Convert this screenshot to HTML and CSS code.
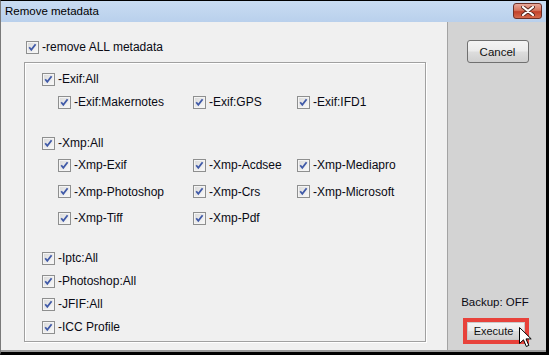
FILE: index.html
```html
<!DOCTYPE html>
<html lang="en">
<head>
    <meta charset="UTF-8">
    <meta name="viewport" content="width=device-width, initial-scale=1.0">
    <title>Remove metadata</title>
    <link rel="stylesheet" href="styles.css">
</head>
<body>
    <div class="window">
        <div class="titlebar">
            <span class="title">Remove metadata</span>
            <span class="close-btn">
                <svg width="14" height="10" viewBox="0 0 14 10">
                    <path d="M2 1 L12 9 M12 1 L2 9" stroke="#5a2a22" stroke-width="4" stroke-linecap="round"/>
                    <path d="M2 1 L12 9 M12 1 L2 9" stroke="#fff" stroke-width="2.2" stroke-linecap="round"/>
                </svg>
            </span>
        </div>

        <div class="client">
            <div class="main">
                <label class="check top-check"><span class="box"></span>-remove ALL metadata</label>

                <div class="group">
                    <!-- Exif -->
                    <div class="section">
                        <label class="check"><span class="box"></span>-Exif:All</label>
                        <div class="sub">
                            <label class="check"><span class="box"></span>-Exif:Makernotes</label>
                            <label class="check"><span class="box"></span>-Exif:GPS</label>
                            <label class="check"><span class="box"></span>-Exif:IFD1</label>
                        </div>
                    </div>

                    <!-- Xmp -->
                    <div class="section xmp">
                        <label class="check"><span class="box"></span>-Xmp:All</label>
                        <div class="sub">
                            <label class="check"><span class="box"></span>-Xmp-Exif</label>
                            <label class="check"><span class="box"></span>-Xmp-Acdsee</label>
                            <label class="check"><span class="box"></span>-Xmp-Mediapro</label>
                            <label class="check"><span class="box"></span>-Xmp-Photoshop</label>
                            <label class="check"><span class="box"></span>-Xmp-Crs</label>
                            <label class="check"><span class="box"></span>-Xmp-Microsoft</label>
                            <label class="check"><span class="box"></span>-Xmp-Tiff</label>
                            <label class="check"><span class="box"></span>-Xmp-Pdf</label>
                        </div>
                    </div>

                    <!-- Others -->
                    <div class="section others">
                        <label class="check"><span class="box"></span>-Iptc:All</label>
                        <label class="check"><span class="box"></span>-Photoshop:All</label>
                        <label class="check"><span class="box"></span>-JFIF:All</label>
                        <label class="check"><span class="box"></span>-ICC Profile</label>
                    </div>
                </div>
            </div>

            <div class="side">
                <button class="btn cancel-btn">Cancel</button>
                <div class="spacer"></div>
                <div class="backup">Backup: OFF</div>
                <div class="highlight">
                    <button class="btn execute-btn">Execute</button>
                </div>
                <svg class="cursor" width="13" height="21" viewBox="0 0 13 21">
                    <path d="M0.5 0.5 L0.5 16.5 L4.5 12.8 L7.3 19.5 L9.8 18.4 L7 11.9 L12.2 11.9 Z" fill="#fff" stroke="#000" stroke-width="1" stroke-linejoin="miter"/>
                </svg>
            </div>
        </div>
    </div>
</body>
</html>
```

FILE: styles.css
```css
body {
    margin: 0;
    padding: 0;
    font-family: 'Liberation Sans', Arial, sans-serif;
    font-size: 12px;
    color: #0a0a14;
}

.window {
    width: 549px;
    height: 355px;
    box-sizing: border-box;
    border-top: 1px solid #000;
    border-left: 1px solid #7a7a7a;
    border-right: 3px solid #000;
    border-bottom: 3px solid #000;
    display: flex;
    flex-direction: column;
    overflow: hidden;
}

.titlebar {
    height: 21px;
    background: linear-gradient(to bottom, #c9dcf2 0%, #b9d0ec 100%);
    display: flex;
    align-items: center;
    justify-content: space-between;
    padding: 0 4px 0 4px;
}

.title {
    font-size: 11.5px;
    color: #000;
    margin-top: -2px;
}

.close-btn {
    width: 29px;
    height: 16px;
    box-sizing: border-box;
    border: 1px solid #6d3027;
    border-radius: 3px;
    background: linear-gradient(to bottom, #e9a99b 0%, #d6765f 45%, #c2412a 55%, #d56a4d 100%);
    display: flex;
    align-items: center;
    justify-content: center;
    margin-top: -2px;
}

.client {
    flex: 1;
    display: flex;
    border-bottom: 2px solid #9b9b9b;
}

.main {
    width: 447px;
    background-color: #f0f0f0;
    padding: 15px 0 0 23px;
    box-sizing: border-box;
    border-right: 1px solid #a3a3a3;
}

.side {
    flex: 1;
    background-color: #d3d3d3;
    display: flex;
    flex-direction: column;
    align-items: center;
    padding: 18px 0 6px 0;
    position: relative;
}

/* checkboxes */
.check {
    display: flex;
    align-items: center;
    gap: 3px;
    height: 20px;
    white-space: nowrap;
}

.box {
    width: 13px;
    height: 13px;
    box-sizing: border-box;
    border: 1px solid #8e8f8f;
    background-color: #f4f4f4;
    background-image:
        url("data:image/svg+xml,%3Csvg xmlns='http://www.w3.org/2000/svg' width='11' height='11' viewBox='0 0 11 11'%3E%3Cpath d='M2.2 5.2 L4.3 7.8 L8.6 2.2' fill='none' stroke='%23405aa8' stroke-width='1.8'/%3E%3C/svg%3E"),
        linear-gradient(to bottom right, #d8d8d8, #fbfbfb);
    background-repeat: no-repeat;
    box-shadow: inset 0 0 0 1px #f4f4f4;
    flex: none;
}

.top-check {
    margin-left: 2px;
}

.group {
    width: 402px;
    box-sizing: border-box;
    margin-top: 5px;
    border: 1px solid #a0a0a0;
    box-shadow: inset 1px 1px 0 #fff, 1px 1px 0 #fff;
    padding: 6px 0 4px 17px;
}

.sub {
    display: grid;
    grid-template-columns: 135px 104px auto;
    grid-auto-rows: 20px;
    margin-left: 16px;
    margin-top: 3px;
}

.xmp {
    margin-top: 21px;
}

.xmp .sub {
    margin-top: 2px;
    row-gap: 6.5px;
}

.others {
    margin-top: 20px;
    display: flex;
    flex-direction: column;
    gap: 3px;
}

/* buttons */
.btn {
    font-family: 'Liberation Sans', Arial, sans-serif;
    font-size: 11.5px;
    color: #111;
    border: 1px solid #707070;
    border-radius: 3px;
    background: linear-gradient(to bottom, #f4f4f4 0%, #ebebeb 48%, #dddddd 52%, #cfcfcf 100%);
    padding: 0;
    cursor: default;
}

.cancel-btn {
    width: 62px;
    height: 23px;
    margin-left: 1px;
}

.spacer {
    flex: 1;
}

.backup {
    font-size: 11.5px;
    margin-left: -4px;
    line-height: 14px;
    margin-bottom: 9px;
}

.highlight {
    width: 66px;
    height: 26px;
    box-sizing: border-box;
    border: 4px solid #e8423b;
    margin-left: -3px;
    display: flex;
}

.execute-btn {
    flex: 1;
    border-radius: 0;
    border-color: #c9c9c9;
    font-size: 11px;
    padding-right: 4px;
}

.cursor {
    position: absolute;
    left: 71px;
    top: 305px;
}
```
